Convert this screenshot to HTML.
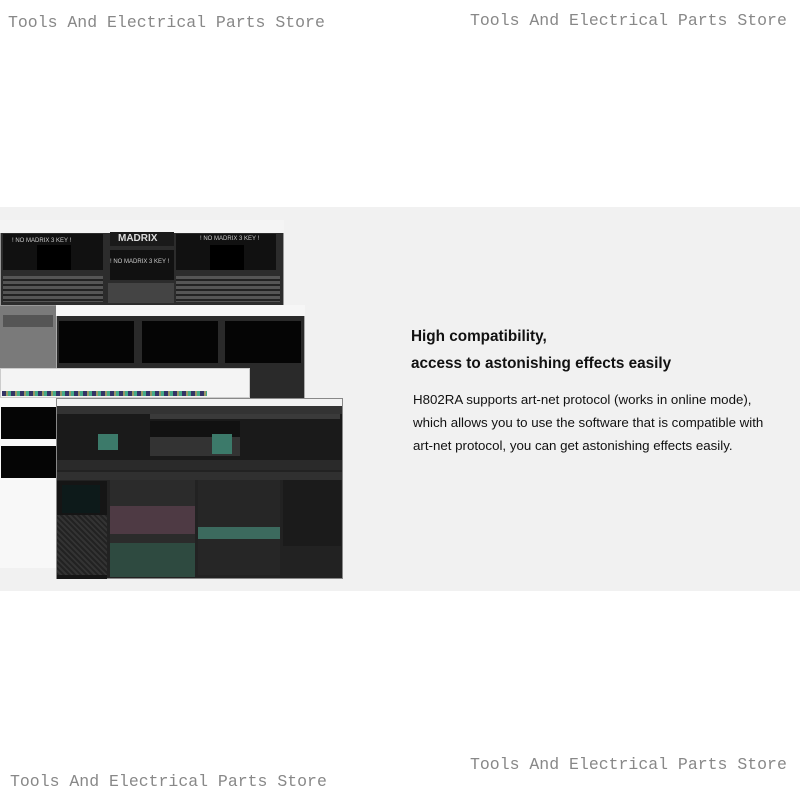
<!DOCTYPE html>
<html><head><meta charset="utf-8"><style>
*{margin:0;padding:0;box-sizing:border-box}
body{width:800px;height:800px;background:#fff;position:relative;overflow:hidden;font-family:"Liberation Sans",sans-serif}
.wm{position:absolute;font-family:"Liberation Mono",monospace;font-size:16.5px;color:#888;white-space:nowrap}
.band{position:absolute;left:0;top:207px;width:800px;height:384px;background:#f1f1f1}
.a{position:absolute}
.t{position:absolute;color:#111;white-space:nowrap}
</style></head><body>
<div class="wm" style="left:8px;top:13px">Tools And Electrical Parts Store</div>
<div class="wm" style="left:470px;top:11px">Tools And Electrical Parts Store</div>
<div class="wm" style="left:10px;top:772px">Tools And Electrical Parts Store</div>
<div class="wm" style="left:470px;top:755px">Tools And Electrical Parts Store</div>
<div class="band"></div>

<div class="a" style="left:0;top:220px;width:284px;height:86px;background:#2c2c2c;border:1px solid #999"></div>
<div class="a" style="left:0;top:220px;width:284px;height:13px;background:#f4f4f4"></div>
<div class="a" style="left:3px;top:234px;width:100px;height:36px;background:#111"></div>
<div class="a" style="left:37px;top:245px;width:34px;height:25px;background:#000"></div>
<div class="a" style="left:110px;top:232px;width:64px;height:14px;background:#1a1a1a"></div>
<div class="t" style="left:118px;top:233px;font-size:10px;font-weight:bold;color:#ddd">MADRIX</div>
<div class="a" style="left:110px;top:250px;width:64px;height:30px;background:#111"></div>
<div class="a" style="left:176px;top:234px;width:100px;height:36px;background:#111"></div>
<div class="a" style="left:210px;top:245px;width:34px;height:25px;background:#000"></div>
<div class="t" style="left:12px;top:238px;font-size:6px;color:#ccc">! NO MADRIX 3 KEY !</div>
<div class="t" style="left:110px;top:259px;font-size:6px;color:#ccc">! NO MADRIX 3 KEY !</div>
<div class="t" style="left:200px;top:236px;font-size:6px;color:#ccc">! NO MADRIX 3 KEY !</div>
<div class="a" style="left:3px;top:276px;width:100px;height:26px;background:repeating-linear-gradient(#555 0 3px,#222 3px 5px)"></div>
<div class="a" style="left:176px;top:276px;width:104px;height:26px;background:repeating-linear-gradient(#555 0 3px,#222 3px 5px)"></div>
<div class="a" style="left:108px;top:283px;width:66px;height:20px;background:#444"></div>
<div class="a" style="left:0;top:306px;width:58px;height:74px;background:#7a7a7a"></div>
<div class="a" style="left:3px;top:315px;width:50px;height:12px;background:#555"></div>
<div class="a" style="left:56px;top:305px;width:249px;height:94px;background:#2a2a2a;border:1px solid #aaa"></div>
<div class="a" style="left:56px;top:305px;width:249px;height:11px;background:#f6f6f6"></div>
<div class="a" style="left:59px;top:321px;width:75px;height:42px;background:#050505"></div>
<div class="a" style="left:142px;top:321px;width:76px;height:42px;background:#050505"></div>
<div class="a" style="left:225px;top:321px;width:76px;height:42px;background:#050505"></div>
<div class="a" style="left:0;top:368px;width:250px;height:30px;background:#f4f4f4;border:1px solid #ccc"></div>
<div class="a" style="left:2px;top:391px;width:205px;height:5px;background:repeating-linear-gradient(90deg,#336 0 4px,#996 4px 6px,#4a8 6px 9px)"></div>
<div class="a" style="left:0;top:398px;width:58px;height:170px;background:#f8f8f8;border-right:1px solid #ccc"></div>
<div class="a" style="left:1px;top:407px;width:56px;height:32px;background:#050505"></div>
<div class="a" style="left:1px;top:446px;width:56px;height:32px;background:#050505"></div>
<div class="a" style="left:56px;top:398px;width:287px;height:181px;background:#222;border:1px solid #888"></div>
<div class="a" style="left:57px;top:399px;width:285px;height:7px;background:#f2f2f2"></div>
<div class="a" style="left:57px;top:406px;width:285px;height:8px;background:#333"></div>
<div class="a" style="left:57px;top:414px;width:285px;height:46px;background:#1a1a1a"></div>
<div class="a" style="left:150px;top:414px;width:190px;height:5px;background:#3a3a3a"></div>
<div class="a" style="left:150px;top:421px;width:90px;height:19px;background:#111"></div>
<div class="a" style="left:150px;top:437px;width:90px;height:19px;background:#333"></div>
<div class="a" style="left:212px;top:434px;width:20px;height:20px;background:#3c7a6a"></div>
<div class="a" style="left:98px;top:434px;width:20px;height:16px;background:#3c7a6a"></div>
<div class="a" style="left:57px;top:460px;width:285px;height:10px;background:#2a2a2a"></div>
<div class="a" style="left:57px;top:472px;width:285px;height:8px;background:#303030"></div>
<div class="a" style="left:57px;top:481px;width:50px;height:98px;background:#151515"></div>
<div class="a" style="left:62px;top:485px;width:38px;height:28px;background:#0d1a1a"></div>
<div class="a" style="left:57px;top:515px;width:50px;height:60px;background:repeating-linear-gradient(45deg,#222 0 2px,#333 2px 4px)"></div>
<div class="a" style="left:110px;top:480px;width:85px;height:95px;background:#2b2b2b"></div>
<div class="a" style="left:110px;top:506px;width:85px;height:28px;background:#4e3a44"></div>
<div class="a" style="left:110px;top:543px;width:85px;height:34px;background:#2e4a40"></div>
<div class="a" style="left:198px;top:480px;width:82px;height:95px;background:#262626"></div>
<div class="a" style="left:198px;top:527px;width:82px;height:12px;background:#3c6a5e"></div>
<div class="a" style="left:283px;top:480px;width:58px;height:66px;background:#1b1b1b"></div>

<div class="t" style="left:411px;top:328px;font-size:15.3px;font-weight:bold">High compatibility,</div>
<div class="t" style="left:411px;top:355px;font-size:15.3px;font-weight:bold">access to astonishing effects easily</div>
<div class="t" style="left:413px;top:392px;font-size:13.3px">H802RA supports art-net protocol (works in online mode),</div>
<div class="t" style="left:413px;top:415px;font-size:13.3px">which allows you to use the software that is compatible with</div>
<div class="t" style="left:413px;top:438px;font-size:13.3px">art-net protocol, you can get astonishing effects easily.</div>
</body></html>
